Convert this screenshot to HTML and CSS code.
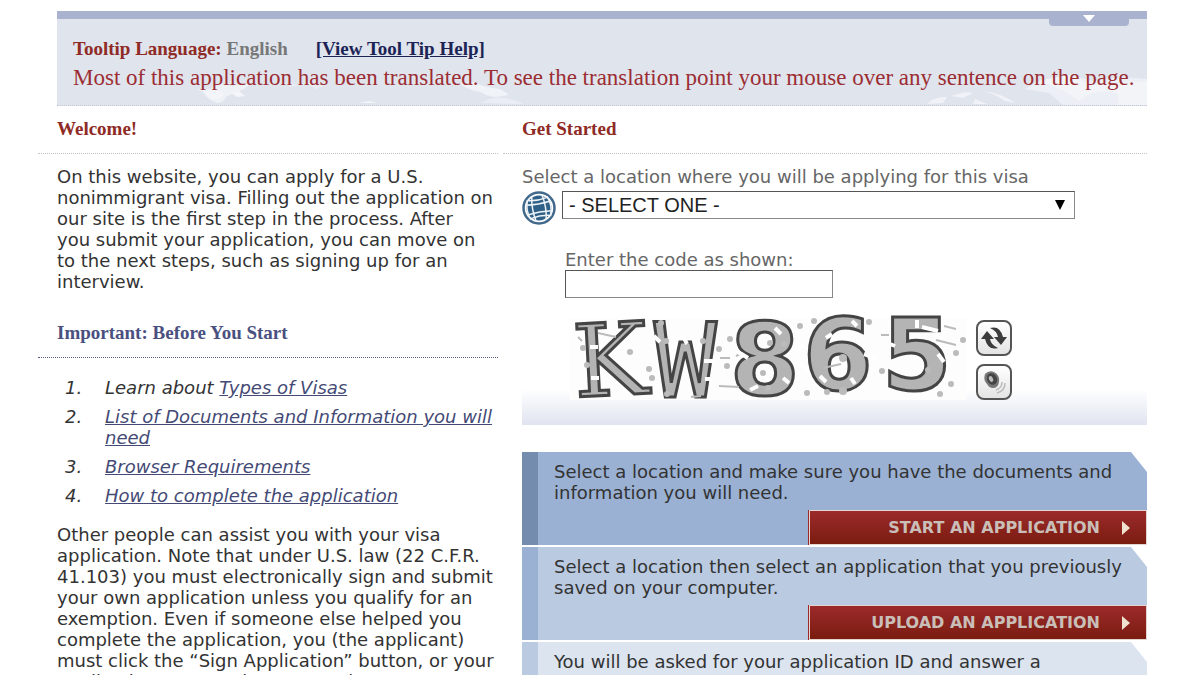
FILE: index.html
```html
<!DOCTYPE html>
<html lang="en">
<head>
    <meta charset="UTF-8">
    <meta name="viewport" content="width=device-width, initial-scale=1.0">
    <title>Apply for a Nonimmigrant Visa</title>
    <link rel="stylesheet" href="styles.css">
</head>
<body>
    <!-- Tooltip language banner -->
    <header class="banner">
        <svg class="hills hills-left" width="240" height="26" viewBox="0 0 240 26" aria-hidden="true">
            <path fill="#eef1f6" d="M0 10q6 2 8 6t12 8q6 0 9-6l8-4 10-4 8-6-20 3-12-3-10 6z"/>
            <path fill="#f3f5f9" d="M8 13q4 8 12 8 5-2 7-7l-8-3zM34 14l6 4 8-1-6-5zM162 24l10-2 8 2zM256 4z"/>
            <path fill="#e9edf3" d="M110 4l20 2-12 4zM82 2l20 4-8 2z"/>
        </svg>
        <svg class="hills hills-middle" width="130" height="26" viewBox="0 0 130 26" aria-hidden="true">
            <path fill="#f0f3f8" d="M14 4q10 8 22 9 5 4 14 5l14-2q-6-6-16-7T30 3z"/>
            <path fill="#eaedf4" d="M36 24q10-6 22-5 14 2 20 6z"/>
        </svg>
        <svg class="hills hills-right" width="220" height="36" viewBox="0 0 220 36" aria-hidden="true">
            <path fill="#eceff5" d="M98 20l14-8 30-6 24 6 28-4 26 2v26h-84l-14-12z"/>
            <path fill="#f3f4f8" d="M112 12l28-6 26 10 54-4v24h-30q6-12-8-14-20 0-30 10-14-12-40-20z"/>
            <path fill="#f0f2f7" d="M0 35q8-8 20-7l-4 6zM24 27l14-4 8 1-10 5zM56 22q18 2 32 12l-10-2q-10-7-22-10zM48 30l12 5H46z"/>
        </svg>
        <button type="button" class="banner-toggle" aria-label="Collapse banner">
            <svg width="12" height="7" viewBox="0 0 12 7"><path fill="#fff" d="M0 0h12L6 7z"/></svg>
        </button>
        <div class="language">
            <strong>Tooltip Language: <span>English</span></strong>
            <a href="#">[View Tool Tip Help]</a>
        </div>
        <p>Most of this application has been translated. To see the translation point your mouse over any sentence on the page.</p>
    </header>

    <main class="columns">
        <section>
            <h2>Welcome!</h2>
            <div class="content">
                <p>On this website, you can apply for a U.S. nonimmigrant visa. Filling out the application on our site is the first step in the process. After<br>you submit your application, you can move on<br>to the next steps, such as signing up for an<br>interview.</p>
            </div>

            <h2 class="important">Important: Before You Start</h2>
            <div class="content">
                <ol class="steps">
                    <li>Learn about <a href="#">Types of Visas</a></li>
                    <li><a href="#">List of Documents and Information you will need</a></li>
                    <li><a href="#">Browser Requirements</a></li>
                    <li><a href="#">How to complete the application</a></li>
                </ol>
                <p>Other people can assist you with your visa application. Note that under U.S. law (22 C.F.R. 41.103) you must electronically sign and submit your own application unless you qualify for an exemption. Even if someone else helped you complete the application, you (the applicant) must click the “Sign Application” button, or your application may not be accepted.</p>
            </div>
        </section>

        <section>
            <h2>Get Started</h2>
            <form class="start-form">
                <label for="location">Select a location where you will be applying for this visa</label>
                <div class="location-row">
                    <svg width="34" height="34" viewBox="0 0 34 34" aria-hidden="true">
                        <circle cx="17" cy="17" r="15.5" fill="#fff" stroke="#41698b" stroke-width="2.5"/>
                        <circle cx="17" cy="17" r="12.5" fill="#2f6188"/>
                        <g fill="none" stroke="#eef3f7" stroke-width="1.5" transform="rotate(-10 17 17)">
                            <path d="M12 4q-3 13 0 26M22 4q3 13 0 26M7 7q-4 10 0 20M27 7q4 10 0 20"/>
                            <path d="M4 12q13 2 26 0M4 22q13-2 26 0M8 8q9 2 18 0M8 26q9-2 18 0"/>
                        </g>
                    </svg>
                    <div class="select-box">
                        <select id="location">
                            <option>- SELECT ONE -</option>
                        </select>
                        <svg class="arrow" width="10" height="10" viewBox="0 0 10 10" aria-hidden="true"><path d="M0 0h10L5 10z"/></svg>
                    </div>
                </div>

                <div class="code">
                    <label for="code">Enter the code as shown:</label>
                    <input type="text" id="code">
                    <div class="captcha">
                        <svg class="captcha-image" width="396" height="84" viewBox="0 0 396 84" role="img" aria-label="Security code">
                            <rect width="396" height="82" fill="#fdfdfd"/>
                            <text class="captcha-text" y="79"><tspan class="serif" x="5" rotate="-3">K</tspan><tspan class="mono" x="84">W</tspan><tspan class="wide" x="160" y="77">8</tspan><tspan class="wide" x="233" y="72">6</tspan><tspan class="wide" x="312" y="72">5</tspan></text>
                            <!-- Noise -->
                            <g fill="#bbb">
                                <circle cx="91" cy="5" r="3"/><circle cx="96" cy="23" r="3"/><circle cx="60" cy="34" r="3"/>
                                <circle cx="79" cy="51" r="3"/><circle cx="82" cy="60" r="3"/><circle cx="13" cy="30" r="3"/>
                                <circle cx="17" cy="47" r="3"/><circle cx="97" cy="76" r="3"/><circle cx="133" cy="23" r="3"/>
                                <circle cx="149" cy="31" r="3"/><circle cx="157" cy="48" r="3"/><circle cx="160" cy="21" r="3"/>
                                <circle cx="244" cy="3" r="3"/><circle cx="299" cy="4" r="3"/><circle cx="273" cy="40" r="4"/>
                                <circle cx="273" cy="73" r="4"/><circle cx="257" cy="74" r="3"/><circle cx="237" cy="75" r="3"/>
                                <circle cx="312" cy="53" r="3"/><circle cx="358" cy="52" r="3"/><circle cx="393" cy="22" r="3"/>
                                <circle cx="386" cy="35" r="3"/><circle cx="381" cy="66" r="3"/><circle cx="370" cy="76" r="3"/>
                                <circle cx="230" cy="8" r="3"/><circle cx="200" cy="25" r="3"/><circle cx="214" cy="26" r="3"/>
                                <circle cx="193" cy="55" r="3"/><circle cx="198" cy="70" r="3"/>
                            </g>
                            <path fill="none" stroke="#bbb" stroke-width="2" d="M28 15l18 4M121 79l10-1M150 40h10M149 68l20 1M166 38l6-3 6 4M253 50l18-4M311 17h8M366 22l20 5M374 8l12 3M8 19l4 4"/>
                            <path fill="none" stroke="#fff" stroke-width="4" d="M20 29h8M21 60h8M84 18l6 6M134 43h12M113 18l4 8M135 61h8M168 34l10 6M180 72l8-4M226 32l8-5M230 46l8 6M256 20l6-4M282 3l5 5M281 60l4 6M294 36l12 4M320 26l5 2M347 2v8M352 9l16 4M368 36l6 8M205 10l6 6M213 60l6 5M250 58l6 6"/>
                        </svg>
                        <div class="captcha-buttons">
                            <button type="button" aria-label="New code">
                                <svg width="28" height="28" viewBox="0 0 28 28">
                                    <path fill="#3c3c3c" d="M10 4q10-3 13 9h4l-6 8-7-8h4q-1-6-8-9zM18 24q-10 3-13-9H1l6-8 7 8h-4q1 6 8 9z"/>
                                </svg>
                            </button>
                            <button type="button" aria-label="Play code">
                                <svg width="28" height="28" viewBox="0 0 28 28">
                                    <path fill="#777" d="M5 6q4-4 9-2 6 3 5 10-1 6-6 6-4 0-6-4-4-4-2-10z"/>
                                    <ellipse cx="12" cy="11" rx="5" ry="6" fill="#444" transform="rotate(-25 12 11)"/>
                                    <ellipse cx="11" cy="11" rx="2" ry="3" fill="#bbb" transform="rotate(-25 11 11)"/>
                                    <path fill="none" stroke="#bbb" stroke-width="1.5" d="M22 14q0 6-6 8M25 15q0 8-8 10"/>
                                </svg>
                            </button>
                        </div>
                    </div>
                </div>
            </form>

            <!-- Application options -->
            <div class="options">
                <div class="option option-start">
                    <p>Select a location and make sure you have the documents and information you will need.</p>
                    <button type="button">START AN APPLICATION <svg width="8" height="14" viewBox="0 0 8 14"><path fill="#efe3cf" d="M0 0l8 7-8 7z"/></svg></button>
                </div>
                <div class="option option-upload">
                    <p>Select a location then select an application that you previously saved on your computer.</p>
                    <button type="button">UPLOAD AN APPLICATION <svg width="8" height="14" viewBox="0 0 8 14"><path fill="#efe3cf" d="M0 0l8 7-8 7z"/></svg></button>
                </div>
                <div class="option option-retrieve">
                    <p>You will be asked for your application ID and answer a<br>security question.</p>
                    <button type="button">RETRIEVE AN APPLICATION <svg width="8" height="14" viewBox="0 0 8 14"><path fill="#efe3cf" d="M0 0l8 7-8 7z"/></svg></button>
                </div>
            </div>
        </section>
    </main>
</body>
</html>
```
FILE: styles.css
```css
/* =======================
   General
======================= */
* {
    box-sizing: border-box;
}

body {
    margin: 0;
    padding: 11px 53px 0 38px;
    height: 100vh;
    overflow: hidden;
    background-color: #fff;
    color: #333;
    font-family: Verdana, "DejaVu Sans", sans-serif;
    font-size: 18px;
    line-height: 21px;
}

p {
    margin: 0;
}

a {
    color: #444a75;
}

/* =======================
   Banner
======================= */
.banner {
    position: relative;
    margin-left: 19px;
    padding: 18px 8px 10px 16px;
    border-top: 8px solid #a9b3cf;
    border-bottom: 1px dotted #c4c8d2;
    background-color: #e0e4ed;
    font-family: "Liberation Serif", serif;
}

.hills {
    position: absolute;
    bottom: 0;
}

.hills-left {
    left: 140px;
}

.hills-middle {
    left: 388px;
}

.hills-right {
    right: 0;
}

.banner-toggle {
    position: absolute;
    top: -8px;
    right: 18px;
    width: 80px;
    height: 15px;
    padding: 0;
    border: none;
    border-radius: 0 0 4px 4px;
    background-color: #a9b3cf;
    line-height: 0;
}

.language {
    position: relative;
    display: flex;
    gap: 28px;
    font-size: 19px;
    font-weight: bold;
    line-height: 24px;
    color: #8f2b26;
}

.language span {
    color: #777;
}

.language a {
    color: #1c2456;
}

.banner p {
    position: relative;
    font-size: 23px;
    line-height: 34px;
    color: #9b2d33;
}

/* =======================
   Columns
======================= */
.columns {
    display: grid;
    grid-template-columns: 460fr 644fr;
    gap: 5px;
}

h2 {
    margin: 0 0 12px;
    padding: 12px 0 13px 19px;
    border-bottom: 1px dotted #c4c4c4;
    font-family: "Liberation Serif", serif;
    font-size: 19px;
    line-height: 22px;
    color: #8f2b26;
}

.content {
    padding-left: 19px;
}

h2.important {
    margin: 18px 0 19px;
    border-bottom-color: #5a6088;
    color: #4a5080;
}

.steps {
    margin: 0 0 18px;
    padding-left: 48px;
    font-style: italic;
    list-style: none;
    counter-reset: step;
}

.steps li {
    margin-bottom: 8px;
    counter-increment: step;
}

.steps li::before {
    content: counter(step) ".";
    float: left;
    margin-left: -40px;
}

/* =======================
   Form
======================= */
.start-form {
    margin-left: 19px;
    padding-bottom: 23px;
    background: linear-gradient(#fff, #e0e4f0) bottom / 100% 36px no-repeat;
    color: #666;
}

.start-form label {
    display: block;
}

.location-row {
    display: flex;
    gap: 6px;
    margin-top: 4px;
}

.select-box {
    position: relative;
    width: 513px;
}

select,
input {
    display: block;
    height: 28px;
    border: 1px solid;
    border-color: #555 #888 #888 #555;
    border-radius: 0;
    background-color: #fff;
    font-family: "Liberation Sans", Arial, sans-serif;
    font-size: 20px;
}

select {
    width: 100%;
    padding: 0 6px;
    appearance: none;
    color: #222;
}

.arrow {
    position: absolute;
    top: 9px;
    right: 10px;
}

.code {
    margin: 24px 0 0 43px;
}

input {
    width: 268px;
}

.captcha {
    display: flex;
    gap: 10px;
    margin-top: 20px;
}

.captcha-image {
    margin-left: 5px;
    overflow: visible;
}

.captcha-text {
    fill: #b4b4b4;
    stroke: #444;
    stroke-width: 3px;
    font-family: "DejaVu Sans", sans-serif;
    font-size: 104px;
}

.captcha-text .serif {
    font-family: "DejaVu Serif", serif;
    font-size: 100px;
}

.captcha-text .mono {
    font-family: "DejaVu Sans Mono", monospace;
}

.captcha-text .wide {
    font-size: 100px;
    font-weight: bold;
}

.captcha-buttons {
    display: flex;
    flex-direction: column;
    gap: 8px;
    padding-top: 2px;
}

.captcha-buttons button {
    width: 36px;
    height: 36px;
    padding: 2px;
    border: 2px solid #555;
    border-radius: 8px;
    background: linear-gradient(#fff, #e4e4e4);
    line-height: 0;
}

/* =======================
   Application options
======================= */
.options {
    display: grid;
    gap: 2px;
    margin: 27px 0 0 19px;
}

.option {
    display: flex;
    flex-direction: column;
    min-height: 93px;
    padding-top: 9px;
    border-left: 16px solid;
    clip-path: polygon(0 0, calc(100% - 16px) 0, 100% 20px, 100% 100%, 0 100%);
}

.option p {
    padding: 0 16px;
}

.option-start {
    border-color: #748cae;
    background-color: #9ab1d4;
}

.option-upload {
    border-color: #9ab1d4;
    background-color: #bacae1;
}

.option-retrieve {
    border-color: #bacae1;
    background-color: #dce4ef;
}

.option button {
    display: flex;
    align-items: center;
    justify-content: flex-end;
    gap: 22px;
    width: 338px;
    height: 35px;
    margin: 7px 0 0 auto;
    padding: 0 16px 0 0;
    border: 1px solid #e3d5d0;
    background: linear-gradient(#9c2a2b, #7a1c10);
    box-shadow: -1px 0 #9c2a2b;
    color: #c9bfb8;
    font-family: Verdana, "DejaVu Sans", sans-serif;
    font-size: 16px;
    font-weight: bold;
}
```
